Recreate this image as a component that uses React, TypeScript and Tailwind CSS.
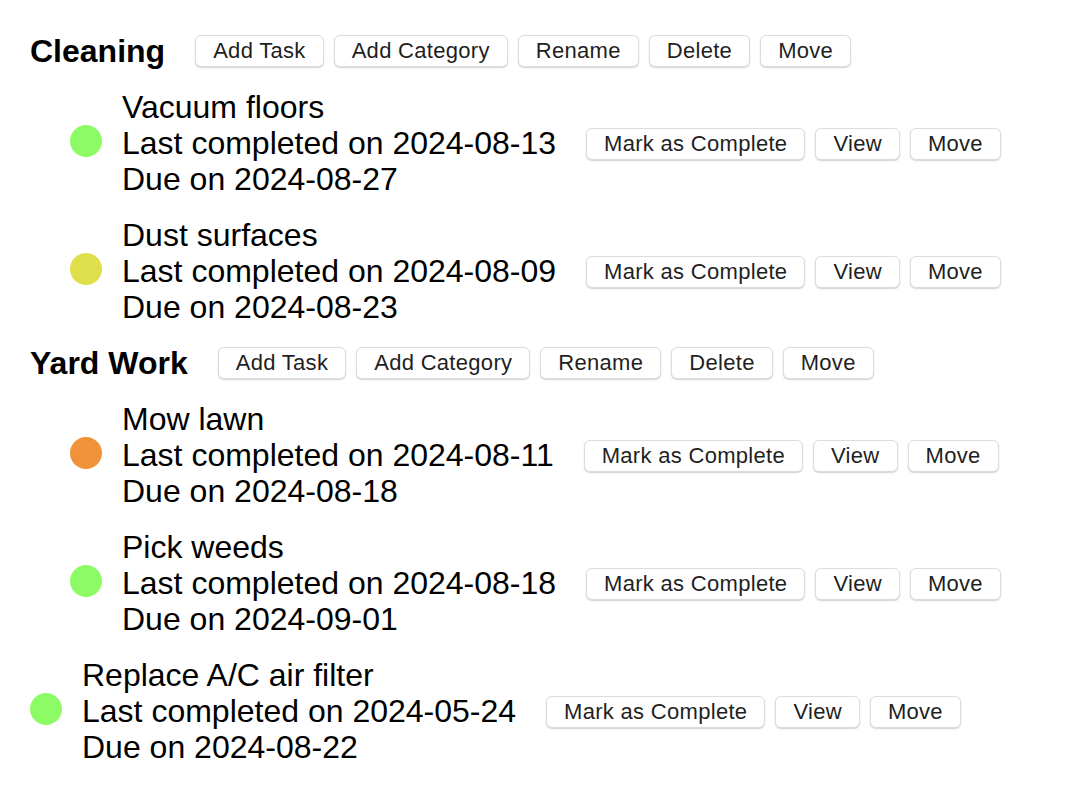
import React from "react";

type Task = { name: string; last: string; due: string; color: string };
type Category = { name: string; tasks: Task[] };

const categories: Category[] = [
  {
    name: "Cleaning",
    tasks: [
      { name: "Vacuum floors", last: "2024-08-13", due: "2024-08-27", color: "bg-[#8cfb66]" },
      { name: "Dust surfaces", last: "2024-08-09", due: "2024-08-23", color: "bg-[#dedf4b]" },
    ],
  },
  {
    name: "Yard Work",
    tasks: [
      { name: "Mow lawn", last: "2024-08-11", due: "2024-08-18", color: "bg-[#ef9239]" },
      { name: "Pick weeds", last: "2024-08-18", due: "2024-09-01", color: "bg-[#8cfb66]" },
    ],
  },
];

const looseTasks: Task[] = [
  { name: "Replace A/C air filter", last: "2024-05-24", due: "2024-08-22", color: "bg-[#8cfb66]" },
];

function Btn({ label }: { label: string }) {
  return (
    <button className="h-8 px-[17px] rounded-[6px] bg-white border border-[#dcdcdc] shadow-[0_1px_1.5px_rgba(0,0,0,0.18)] text-[22px] leading-none tracking-[0.3px] text-[#1f1f1f]">
      {label}
    </button>
  );
}

function TaskRow({ task }: { task: Task }) {
  return (
    <div className="flex items-center">
      <div className={`w-8 h-8 rounded-full mt-[-4px] ${task.color}`} />
      <div className="ml-5 text-[32px] leading-[36px] text-black">
        <div>{task.name}</div>
        <div>Last completed on {task.last}</div>
        <div>Due on {task.due}</div>
      </div>
      <div className="ml-[30px] mt-[2px] flex gap-[10px]">
        <Btn label="Mark as Complete" />
        <Btn label="View" />
        <Btn label="Move" />
      </div>
    </div>
  );
}

export default function App() {
  return (
    <div className="min-h-screen bg-white px-[30px] pt-[33px] font-['Liberation_Sans',Arial,sans-serif] flex flex-col gap-5">
      {categories.map((cat) => (
        <React.Fragment key={cat.name}>
          <div className="flex items-center">
            <h2 className="text-[32px] leading-[36px] font-bold text-black">{cat.name}</h2>
            <div className="ml-[30px] flex gap-[10px]">
              <Btn label="Add Task" />
              <Btn label="Add Category" />
              <Btn label="Rename" />
              <Btn label="Delete" />
              <Btn label="Move" />
            </div>
          </div>
          {cat.tasks.map((t) => (
            <div key={t.name} className="pl-10">
              <TaskRow task={t} />
            </div>
          ))}
        </React.Fragment>
      ))}
      {looseTasks.map((t) => (
        <TaskRow key={t.name} task={t} />
      ))}
    </div>
  );
}
